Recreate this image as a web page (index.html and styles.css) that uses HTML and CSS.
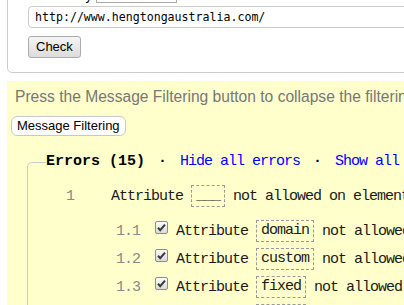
FILE: index.html
```html
<!DOCTYPE html>
<html>
<head>
<meta charset="utf-8">
<link rel="stylesheet" href="styles.css">
</head>
<body>
<div class="page">
  <div class="panel">
    <div class="byrow">
      <span class="bylabel">Check by</span>
      <span class="select"></span>
    </div>
    <div class="urlrow">
      <div class="url">http://www.hengtongaustralia.com/</div>
    </div>
    <div class="btnrow">
      <span class="checkbtn">Check</span>
    </div>
  </div>

  <div class="filters">
    <p class="hint">Press the Message Filtering button to collapse the filtering options and error/warning/info counts.</p>
    <span class="mfbtn">Message Filtering</span>

    <fieldset class="errors">
      <legend class="legend">
        <span class="ltitle">Errors (15)</span>
        <span class="sep">·</span>
        <span class="link">Hide all errors</span>
        <span class="sep">·</span>
        <span class="link">Show all errors</span>
      </legend>

      <div class="row main">
        <span class="num">1</span>
        <span class="txt">Attribute</span>
        <span class="code">___</span>
        <span class="txt">not allowed on element div at this point.</span>
      </div>

      <div class="subs">
        <div class="row sub">
          <span class="num">1.1</span>
          <svg class="cb" width="13" height="13" viewBox="0 0 13 13"><defs><linearGradient id="g1" x1="0" y1="0" x2="0" y2="1"><stop offset="0" stop-color="#fdfdfd"/><stop offset="1" stop-color="#d8d8d8"/></linearGradient></defs><rect x="0.5" y="0.5" width="12" height="12" rx="1.5" fill="url(#g1)" stroke="#8e8e8e"/><path d="M3 6.8 L5.2 9.2 L10 3.6" fill="none" stroke="#3a3a3a" stroke-width="2"/></svg>
          <span class="txt">Attribute</span>
          <span class="code">domain</span>
          <span class="txt">not allowed on element div at this point.</span>
        </div>
        <div class="row sub">
          <span class="num">1.2</span>
          <svg class="cb" width="13" height="13" viewBox="0 0 13 13"><rect x="0.5" y="0.5" width="12" height="12" rx="1.5" fill="url(#g1)" stroke="#8e8e8e"/><path d="M3 6.8 L5.2 9.2 L10 3.6" fill="none" stroke="#3a3a3a" stroke-width="2"/></svg>
          <span class="txt">Attribute</span>
          <span class="code">custom</span>
          <span class="txt">not allowed on element div at this point.</span>
        </div>
        <div class="row sub">
          <span class="num">1.3</span>
          <svg class="cb" width="13" height="13" viewBox="0 0 13 13"><rect x="0.5" y="0.5" width="12" height="12" rx="1.5" fill="url(#g1)" stroke="#8e8e8e"/><path d="M3 6.8 L5.2 9.2 L10 3.6" fill="none" stroke="#3a3a3a" stroke-width="2"/></svg>
          <span class="txt">Attribute</span>
          <span class="code">fixed</span>
          <span class="txt">not allowed on element div at this point.</span>
        </div>
        <div class="row sub">
          <span class="num">1.4</span>
          <svg class="cb" width="13" height="13" viewBox="0 0 13 13"><rect x="0.5" y="0.5" width="12" height="12" rx="1.5" fill="url(#g1)" stroke="#8e8e8e"/><path d="M3 6.8 L5.2 9.2 L10 3.6" fill="none" stroke="#3a3a3a" stroke-width="2"/></svg>
          <span class="txt">Attribute</span>
          <span class="code">width</span>
          <span class="txt">not allowed on element div at this point.</span>
        </div>
      </div>
    </fieldset>
  </div>
</div>
</body>
</html>
```

FILE: styles.css
```css
html, body {
  margin: 0;
  padding: 0;
  background: #ffffff;
  overflow: hidden;
}

.page {
  width: 900px;
  font-family: "Liberation Sans", Arial, sans-serif;
}

.panel {
  margin-left: 7px;
  margin-top: -19px;
  border: 1px solid #cccccc;
  border-radius: 5px;
  padding: 0 0 14px 20px;
}

.byrow {
  display: flex;
  align-items: flex-end;
  gap: 4px;
  height: 21px;
}

.bylabel {
  width: 64px;
  text-align: right;
  font-size: 13px;
  line-height: 15px;
  color: #000;
}

.select {
  display: block;
  width: 79px;
  height: 19px;
  border: 1px solid #a9a9a9;
  background: #fff;
}

.urlrow {
  margin-top: 3px;
}

.url {
  width: 600px;
  height: 20px;
  border: 1px solid #cccccc;
  border-radius: 4px;
  padding-left: 6px;
  font-family: "DejaVu Sans Mono", "Liberation Mono", monospace;
  font-size: 11.6px;
  line-height: 20px;
  color: #000;
}

.btnrow {
  margin-top: 8px;
  display: flex;
}

.checkbtn {
  display: block;
  height: 20px;
  padding: 0 7px;
  border: 1px solid #acacac;
  border-radius: 3px;
  background: linear-gradient(#f5f5f5, #dcdcdc);
  font-size: 13px;
  line-height: 20px;
  color: #000;
}

.filters {
  margin-top: 8px;
  margin-left: 7px;
  background: #ffffcc;
  padding: 6px 0 20px 4px;
  white-space: nowrap;
}

.hint {
  margin: 0;
  padding-left: 4px;
  font-size: 15.6px;
  line-height: 20px;
  color: #777777;
}

.mfbtn {
  display: inline-block;
  margin-top: 9px;
  height: 18px;
  padding: 0 5px;
  border: 1px solid #c8c8c8;
  border-radius: 6px;
  background: #ffffff;
  font-size: 13px;
  line-height: 18px;
  color: #000;
}

.errors {
  margin: 16px 0 0 16px;
  border: 1px solid #cccccc;
  border-radius: 5px;
  padding: 10px 0 40px 18px;
  font-family: "Liberation Mono", "DejaVu Sans Mono", monospace;
  font-size: 15px;
  letter-spacing: -1px;
}

.legend {
  padding: 0;
  display: flex;
  align-items: center;
  height: 20px;
  line-height: 20px;
}

.ltitle {
  font-weight: bold;
  letter-spacing: 0;
  color: #000;
}

.sep {
  font-weight: bold;
  color: #000;
  margin: 0 14px 0 13px;
}

.link {
  color: #0000ff;
}

.row {
  display: flex;
  align-items: center;
  height: 28px;
  gap: 8px;
  color: #1a1a1a;
}

.num {
  color: #888888;
  text-align: right;
}

.main .num {
  width: 28px;
  margin-right: 29px;
}

.subs {
  margin-top: 7px;
}

.sub {
  padding-left: 64px;
}

.sub .num {
  width: 30px;
  margin-right: 7px;
}

.cb {
  align-self: flex-start;
  margin-top: 4px;
  flex: none;
}

.code {
  display: block;
  height: 20px;
  line-height: 20px;
  padding: 0 4px;
  border: 1px dashed #999999;
}
```
